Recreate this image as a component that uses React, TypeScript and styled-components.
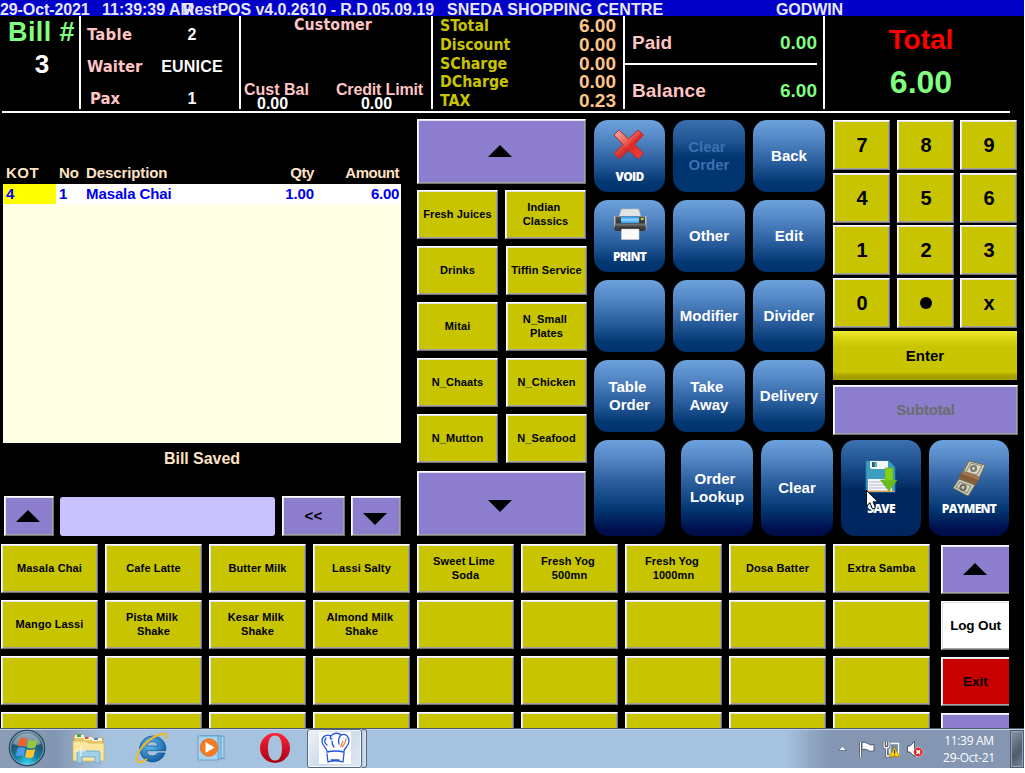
import React from 'react';
import styled, { createGlobalStyle, css } from 'styled-components';

const ARIAL = "'Liberation Sans', Arial, sans-serif";
const TAHOMA = "'DejaVu Sans Condensed', 'DejaVu Sans', Tahoma, sans-serif";

const Global = createGlobalStyle`
  *, *::before, *::after { box-sizing: border-box; }
  body { margin: 0; background: #fff; font-family: ${ARIAL}; }
  button { font-family: inherit; padding: 0; margin: 0; }
`;

const Screen = styled.div`
  position: relative;
  width: 1024px;
  height: 768px;
  display: flex;
  flex-direction: column;
  overflow: hidden;
  background: #000;
  font-weight: bold;
`;

/* ---------- title bar ---------- */

const TitleBar = styled.div`
  flex: none;
  display: flex;
  height: 16px;
  background: #0000c8;
  color: #e6e6f4;
  font-size: 16px;
  line-height: 19px;
  white-space: pre;
`;
const TitlePart = styled.span<{ $w: number; $track?: number }>`
  flex: none;
  width: ${p => p.$w}px;
  letter-spacing: ${p => p.$track ?? 0}px;
`;

/* ---------- header ---------- */

const Header = styled.header`
  flex: none;
  display: flex;
  height: 93px;
  line-height: 1;
`;
const Rule = styled.div`
  flex: none;
  width: 1008px;
  height: 2px;
  margin: 2px 0 0 2px;
  background: #fff;
`;
const Cell = styled.section<{ $w: number; $last?: boolean }>`
  flex: none;
  width: ${p => p.$w}px;
  height: 93px;
  border-right: ${p => (p.$last ? 'none' : '2px solid #fff')};
  display: flex;
  flex-direction: column;
`;
const Label = styled.span<{ $size?: number; $tahoma?: boolean; $color?: string; $indent?: number; $track?: number }>`
  font-family: ${p => (p.$tahoma ? TAHOMA : ARIAL)};
  font-size: ${p => p.$size ?? 16}px;
  color: ${p => p.$color ?? '#fff'};
  margin-left: ${p => p.$indent ?? 0}px;
  letter-spacing: ${p => p.$track ?? 0}px;
  white-space: nowrap;
`;
const BillBox = styled.div`
  display: flex;
  flex-direction: column;
  align-items: center;
  padding-left: 4px;
  line-height: 32px;
`;
const InfoRow = styled.div`
  display: grid;
  grid-template-columns: 65px 80px;
  height: 32px;
  margin-left: 6px;
  line-height: 32px;
  > :last-child { text-align: center; }
`;
const InfoRows = styled.div`
  margin-top: 2.500px;
`;
const CustomerTitle = styled.div`
  height: 17px;
  line-height: 18px;
  text-align: center;
  padding-right: 6px;
`;
const CustomerRow = styled.div`
  display: flex;
  justify-content: space-between;
  padding: 0 8px 0 3px;
  margin-top: 50px;
`;
const CustomerStat = styled.div`
  display: flex;
  flex-direction: column;
  line-height: 13.500px;
`;
const TotalsRow = styled.div`
  display: flex;
  flex: none;
  justify-content: space-between;
  height: 18.750px;
  line-height: 18.750px;
  padding: 0 7px 0 7px;
  &:first-child { margin-top: 1px; }
`;
const PayRow = styled.div`
  flex: none;
  display: flex;
  justify-content: space-between;
  align-items: center;
  height: 47px;
  width: 192px;
  padding: 6px 0 0 7px;
  & + & { border-top: 2px solid #fff; height: 46px; padding-top: 7px; }
`;
const GrandTotal = styled.div`
  display: flex;
  flex-direction: column;
  align-items: center;
  line-height: 43px;
  padding: 2px 7px 0 0;
`;

/* ---------- buttons ---------- */

const bevel = css`
  border: 1px solid;
  border-color: #fff #737373 #737373 #fff;
  box-shadow: inset 1px 1px #e6e3ea, inset -1px -1px #a2a2a2;
`;
const BevelButton = styled.button<{
  $w: number; $h: number; $tone?: 'olive' | 'violet' | 'white' | 'red';
  $size?: number; $muted?: boolean; $clipped?: boolean; $track?: number;
}>`
  ${bevel}
  flex: none;
  display: flex;
  align-items: center;
  justify-content: center;
  width: ${p => p.$w}px;
  height: ${p => p.$h}px;
  padding: ${p => (p.$size ? '0' : '0 0 2px 0')};
  background: ${p => ({ olive: '#c8c400', violet: '#8c7dce', white: '#fff', red: '#c80000' })[p.$tone ?? 'olive']};
  color: ${p => (p.$muted ? '#6d6d6d' : '#000')};
  font-size: ${p => p.$size ?? 11}px;
  font-weight: bold;
  line-height: 14px;
  letter-spacing: ${p => p.$track ?? 0.12}px;
  white-space: pre;
  text-align: center;
  ${p => p.$clipped && css`
    border-right: none;
    box-shadow: inset 1px 1px #e6e3ea, inset 0 -1px #a2a2a2;
  `}
`;
const Arrow = styled.svg<{ $dx?: number; $dy?: number }>`
  display: block;
  margin: ${p => p.$dy ?? 0}px 0 0 ${p => p.$dx ?? 0}px;
`;
const Up = (p: { $dx?: number; $dy?: number }) => (
  <Arrow width="24" height="12" viewBox="0 0 24 12" {...p}><path d="M12 0L24 12H0Z" fill="#000" /></Arrow>
);
const Down = (p: { $dx?: number; $dy?: number }) => (
  <Arrow width="24" height="12" viewBox="0 0 24 12" {...p}><path d="M0 0H24L12 12Z" fill="#000" /></Arrow>
);

const fills = {
  normal: 'linear-gradient(#6ea2dd 0%, #5c90cd 18%, #2c5f9f 58%, #053a75 85%, #00326c 100%)',
  tall: 'linear-gradient(#6ea2dd 0%, #5486c4 20%, #2a5c9c 45%, #033873 72%, #000f4e 93%, #000c49 100%)',
  dim: 'linear-gradient(#3b70af 0%, #1f5391 30%, #00356f 52%, #00356f 100%)',
  pressed: 'linear-gradient(#3c72b1 0%, #1f5090 25%, #00285f 52%, #00265f 100%)',
};
const GlossButton = styled.button<{ $w?: number; $h?: number; $fill?: keyof typeof fills }>`
  flex: none;
  display: flex;
  flex-direction: column;
  align-items: center;
  justify-content: center;
  width: ${p => p.$w ?? 72}px;
  height: ${p => p.$h ?? 72}px;
  border: none;
  border-radius: 14px;
  background: ${p => fills[p.$fill ?? 'normal']};
  color: ${p => (p.$fill === 'dim' ? '#3c70b3' : '#fff')};
  font-size: 15px;
  font-weight: bold;
  line-height: 18px;
  white-space: pre;
`;
const IconCaption = styled.span<{ $gap: number }>`
  margin-top: ${p => p.$gap}px;
  font-family: 'Open Sans', 'Noto Sans', sans-serif;
  font-size: 12px;
  font-weight: 800;
  line-height: 14px;
  letter-spacing: -0.75px;
`;

/* ---------- main area ---------- */

const Main = styled.main`
  flex: none;
  display: flex;
  height: 431px;
`;
const OrderPane = styled.div`
  flex: none;
  display: flex;
  flex-direction: column;
  width: 398px;
  margin: 49px 16px 0 3px;
`;
const OrderLine = styled.div<{ $head?: boolean }>`
  flex: none;
  display: grid;
  grid-template-columns: 53px 27px 160px 71px 87px;
  height: ${p => (p.$head ? 22 : 20)}px;
  line-height: ${p => (p.$head ? 22 : 20)}px;
  font-size: 15px;
  color: ${p => (p.$head ? '#ffe2c4' : '#0000f0')};
  background: ${p => (p.$head ? 'transparent' : '#fff')};
`;
const Col = styled.span<{ $right?: boolean; $mark?: boolean; $pad?: number; $track?: number }>`
  padding: 0 ${p => (p.$right ? p.$pad ?? 0 : 0)}px 0 ${p => (p.$right ? 0 : p.$pad ?? 3)}px;
  text-align: ${p => (p.$right ? 'right' : 'left')};
  letter-spacing: ${p => p.$track ?? -0.1}px;
  background: ${p => (p.$mark ? '#ffff00' : 'transparent')};
`;
const OrderBlank = styled.div`
  flex: none;
  height: 239px;
  background: #ffffe6;
`;
const Status = styled.div`
  flex: none;
  height: 53px;
  line-height: 31px;
  font-size: 16px;
  letter-spacing: -0.05px;
  color: #ffe2c4;
  text-align: center;
`;
const EntryRow = styled.div`
  display: flex;
  align-items: flex-start;
  height: 40px;
  padding-left: 1px;
`;
const EntryField = styled.div`
  flex: none;
  width: 215px;
  height: 39px;
  margin: 1px 7px 0 6px;
  border-radius: 3px;
  background: #c8c3ff;
`;
const Spacer = styled.span`
  flex: none;
  width: 6px;
`;
const CategoryPane = styled.div`
  flex: none;
  width: 170px;
  margin: 6px 7px 0 0;
`;
const CategoryGrid = styled.div`
  display: grid;
  grid-template-columns: 81px 82px;
  column-gap: 7px;
  row-gap: 7px;
  margin: 6px 0 8px;
  > :nth-child(even):not(:nth-child(2)) { justify-self: end; }
`;
const ActionPane = styled.div`
  flex: none;
  width: 430px;
  margin-top: 7px;
`;
const ActionTop = styled.div`
  display: flex;
  height: 320px;
`;
const ActionGrid = styled.div`
  flex: none;
  display: grid;
  grid-template-columns: 71px 72px 72px;
  grid-auto-rows: 72px;
  column-gap: 8px;
  row-gap: 8px;
  width: 239px;
`;
const Keypad = styled.div`
  flex: none;
  width: 185px;
`;
const KeyGrid = styled.div`
  display: grid;
  grid-template-columns: 64px 63px 57px;
  grid-template-rows: 53px 52px 53px 53px;
`;
const EnterButton = styled.button`
  display: block;
  width: 184px;
  height: 49px;
  margin-bottom: 5px;
  border: none;
  background: linear-gradient(#eeea2c 0, #d8d412 8px, #c8c400 16px, #c8c400 41px, #a4a000 45px, #a4a000 49px);
  font-size: 15px;
  font-weight: bold;
`;
const ActionBottom = styled.div`
  display: flex;
  gap: 8px;
  > :first-child { margin-right: 8px; }
`;

/* ---------- products ---------- */

const Products = styled.div`
  flex: none;
  display: flex;
  height: 184px;
  overflow: hidden;
  padding-left: 1px;
`;
const ProductGrid = styled.div`
  flex: none;
  display: grid;
  grid-template-columns: repeat(9, 104px);
  grid-auto-rows: 56px;
  width: 940px;
`;
const SideColumn = styled.div`
  display: flex;
  flex-direction: column;
  gap: 7px;
  padding-top: 1px;
`;

/* ---------- taskbar ---------- */

const Taskbar = styled.footer`
  flex: none;
  display: flex;
  height: 40px;
  border-top: 1px solid #4d5b6b;
  box-shadow: inset 0 1px #c2d2e4;
  background: linear-gradient(90deg, #8c9db5 0, #8296b1 55px, #98b1cd 88px, #a5c2df 105px, #a5c2df 785px, #8fa6c3 812px, #8496b1 832px, #8496b1 100%);
`;
const TaskItem = styled.div<{ $w: number; $active?: boolean }>`
  flex: none;
  display: flex;
  align-items: center;
  justify-content: center;
  width: ${p => p.$w}px;
  height: ${p => (p.$active ? 39 : 38)}px;
  ${p => p.$active && css`
    border: 1px solid #56657a;
    border-radius: 3px;
    padding-bottom: 2px;
    background: linear-gradient(135deg, #eef3f9, #cddcec 50%, #dfe9f4);
    box-shadow: inset 0 0 0 1px #f4f8fc;
  `}
`;
const StackEdge = styled.div`
  width: 5px;
  height: 39px;
  border: 1px solid #56657a;
  border-left: none;
  border-radius: 0 3px 3px 0;
  background: linear-gradient(90deg, #b8c9dd, #dbe6f2);
`;
const Tray = styled.div`
  display: flex;
  align-items: center;
  margin-left: auto;
  padding-top: 1px;
`;
const Clock = styled.div`
  width: 84px;
  padding-left: 2px;
  font-family: 'Open Sans', 'Noto Sans', sans-serif;
  font-size: 12px;
  font-weight: 400;
  line-height: 17px;
  letter-spacing: -0.3px;
  color: #fff;
  text-align: center;
`;
const ShowDesktop = styled.div`
  width: 14px;
  height: 38px;
  border: 1px solid #4c5a6c;
  box-shadow: inset 0 0 0 1px #94a3b5;
  background: linear-gradient(135deg, #8b99aa 0%, #5a6877 45%, #4f5d6d 60%, #76869a 100%);
`;
const Pointer = styled.svg`
  position: absolute;
  left: 866px;
  top: 490px;
`;

/* ---------- icons ---------- */

const VoidIcon = () => (
  <svg width="33" height="32" viewBox="0 0 33 32">
    <defs><linearGradient id="vx" x1="0" y1="0" x2="1" y2="1"><stop offset="0" stopColor="#f9b5a8" /><stop offset=".45" stopColor="#e6564c" /><stop offset=".55" stopColor="#dd2a26" /><stop offset="1" stopColor="#f0443a" /></linearGradient></defs>
    <path d="M1 7L6 2L15.500 11L25 2L30.500 7L21.500 16.500L30.500 25.500L25 31L15.500 22L6.500 31L1 25.500L10 16.500Z" fill="url(#vx)" stroke="#b3282a" strokeWidth="1" strokeLinejoin="round" />
    <path d="M15.500 22L6.500 31L1 25.500L10 16.500Z" fill="#c92b2c" opacity=".35" />
  </svg>
);
const PrinterIcon = () => (
  <svg width="34" height="32" viewBox="0 0 34 32">
    <defs>
      <linearGradient id="pb" x1="0" y1="0" x2="0" y2="1"><stop offset="0" stopColor="#5c5c5e" /><stop offset="1" stopColor="#303032" /></linearGradient>
      <linearGradient id="pg" x1="0" y1="0" x2="0" y2="1"><stop offset="0" stopColor="#1f8de6" /><stop offset=".5" stopColor="#8fd3ff" /><stop offset="1" stopColor="#2b9cf0" /></linearGradient>
    </defs>
    <path d="M8 2Q8 1 9 1H25Q26 1 26 2L28 9H6Z" fill="#e3e3e5" stroke="#bbb" strokeWidth=".6" />
    <path d="M1 8H33.500V22H1Z" fill="#b9babd" />
    <path d="M2.500 8.500H32V15H2.500Z" fill="url(#pb)" />
    <path d="M8 8.500H26V15H8Z" fill="url(#pg)" />
    <path d="M2.500 15H32L33 20.500Q33 23 30 23H4Q1 23 1 20.500Z" fill="url(#pb)" />
    <path d="M2.500 16H32V17.500H2.500Z" fill="#85868a" opacity=".6" />
    <rect x="28" y="10" width="2.500" height="2" fill="#b7e51d" />
    <path d="M7 19.500H27V21.500H7Z" fill="#222" />
    <path d="M8.500 21H26V31.500H8.500Z" fill="#fafafa" stroke="#ccc" strokeWidth=".6" />
  </svg>
);
const SaveIcon = () => (
  <svg width="32" height="33" viewBox="0 0 32 33">
    <path d="M1 1H24L30 7V32H3L1 30Z" fill="#3e9cc0" stroke="#2381a8" strokeWidth=".8" />
    <path d="M5 1H23V7Q23 9 21 9H7Q5 9 5 7Z" fill="#f7f7f7" /><path d="M7 2H12V7H7Z" fill="#1c5d80" /><path d="M9.500 2H12V7H9.500Z" fill="#5fb0cf" />
    <path d="M3 19H27V31H3Z" fill="#f5f5fa" /><path d="M4 22H25M4 25H25M4 28H25" stroke="#b9b9cf" strokeWidth="1" />
    <path d="M2 30.500H29V32H2Z" fill="#d9a65d" />
    <path d="M20 8H28V20H32L24 31L15.500 20H20Z" fill="#84d016" stroke="#5fae15" strokeWidth=".6" />
    <path d="M15.500 20H32L24 31Z" fill="#5fb024" opacity=".7" />
  </svg>
);
const CashIcon = () => (
  <svg width="34" height="37" viewBox="0 0 34 37">
    <path d="M16 1L33 5L17 36L2 28Z" fill="#85806a" />
    <path d="M17 1L33 5L27 18L11 13Z" fill="#dcdac5" stroke="#6e6b58" strokeWidth="1" />
    <path d="M7 19L23 25L16 36L1 28Z" fill="#d4d2bc" stroke="#6e6b58" strokeWidth="1" />
    <path d="M19 3L30 6L25 15L14 12Z M8 22L19 26L15 33L4 27Z" fill="none" stroke="#8f8e77" strokeWidth="1.200" />
    <circle cx="21.500" cy="8.500" r="3.600" fill="#77796b" /><circle cx="21.500" cy="8.500" r="1.400" fill="#d7d6c2" />
    <circle cx="11" cy="27.500" r="3.600" fill="#696b60" /><circle cx="11" cy="27.500" r="1.400" fill="#d7d6c2" />
    <path d="M11 11L28 17L24 25L6 18Z" fill="#855c38" /><path d="M11 11L28 17L26.500 20L9.500 14Z" fill="#a07550" />
  </svg>
);
const StartOrb = () => (
  <svg width="38" height="38" viewBox="0 0 38 38">
    <defs>
      <radialGradient id="ob" cx=".5" cy=".95" r=".9"><stop offset="0" stopColor="#3fd6f0" /><stop offset=".35" stopColor="#1583ad" /><stop offset=".7" stopColor="#24536f" /><stop offset="1" stopColor="#6d8796" /></radialGradient>
    </defs>
    <circle cx="19" cy="19" r="17.700" fill="url(#ob)" stroke="#29485e" strokeWidth="1.200" />
    <path d="M5 15A14.500 14.500 0 0 1 33 15Q19 20 5 15Z" fill="#d3e0e8" opacity=".45" />
    <path d="M11.500 10Q15 7.500 19 10L17.500 18Q14 15.500 9.800 17.800Z" fill="#f0622a" />
    <path d="M20.500 10.800Q25 13 29.500 10.500L27.500 18.500Q23.500 20.500 19 18.500Z" fill="#92c83e" />
    <path d="M9.400 19.500Q13.500 17.200 17.200 19.600L15.600 27.500Q12 25.500 7.800 27.300Z" fill="#4a9be8" />
    <path d="M18.700 20.200Q23 22 27.200 20.100L25.300 28Q21.500 30 17.100 28Z" fill="#ffc52b" />
    <circle cx="19" cy="19" r="16.500" fill="none" stroke="#a8d3e4" strokeWidth=".8" opacity=".7" />
  </svg>
);
const ExplorerIcon = () => (
  <svg width="33" height="31" viewBox="0 0 33 31">
    <path d="M2 3Q2 2 3 2H10L12 5H31V27H2Z" fill="#e8c768" stroke="#c69c3c" strokeWidth=".8" />
    <path d="M3 2H12V5H3Z M12 4H20V7H12Z M20 5H30V8H20Z" fill="#fbf3d2" />
    <path d="M5 1.500H9V4H5Z" fill="#2faa3c" /><path d="M13 4H16.500V6H13Z" fill="#e34a38" /><path d="M22 5H26V7H22Z" fill="#3c8fd8" />
    <path d="M1 8H14L16 10H32V26Q32 28 30 28H3Q1 28 1 26Z" fill="#f9e7a0" stroke="#d8b458" strokeWidth=".8" />
    <path d="M5 30V20Q5 18 7 18H26Q28 18 28 20V30H23V24H10V30Z" fill="#9fd0ea" stroke="#5fa3cb" strokeWidth=".8" />
    <path d="M9 13V23M4 18H14" stroke="#fff" strokeWidth="1" opacity=".9" />
  </svg>
);
const BrowserIcon = () => (
  <svg width="33" height="32" viewBox="0 0 33 32">
    <defs><radialGradient id="ie" cx=".4" cy=".35" r=".75"><stop offset="0" stopColor="#5fc0f0" /><stop offset="1" stopColor="#0c4f97" /></radialGradient></defs>
    <path d="M17.500 4A13 13 0 1 0 30 21H22.500Q21 24 17.500 24Q12 24 11.500 18.700H30.700A13 13 0 0 0 17.500 4ZM11.600 14Q12.500 9.600 17.300 9.600Q22 9.600 22.800 14Z" fill="url(#ie)" stroke="#0d4e8e" strokeWidth=".7" />
    <path d="M31 7Q33 1 27 2Q17 4 8 14Q0 24 2 29Q4 32.500 12 27" fill="none" stroke="#f2b824" strokeWidth="2" />
  </svg>
);
const MediaIcon = () => (
  <svg width="30" height="28" viewBox="0 0 30 28">
    <path d="M24 4L27 3V24L29 25L14 26Z" fill="#7597b4" opacity=".6" />
    <path d="M5 2H27V24H5Z" fill="#a6d3ee" stroke="#5e9cc4" strokeWidth=".8" />
    <path d="M3 2H24V25H3Z" fill="#8fc3e4" stroke="#5e9cc4" strokeWidth=".8" />
    <path d="M1 2H21V26H1Z" fill="#a9d3ec" stroke="#5e9cc4" strokeWidth=".8" />
    <circle cx="12" cy="13.500" r="8.800" fill="#f47b20" stroke="#d9610f" strokeWidth=".6" />
    <path d="M8.500 8L17.500 13.500L8.500 19Z" fill="#fff" />
  </svg>
);
const OperaIcon = () => (
  <svg width="32" height="32" viewBox="0 0 32 32">
    <defs><linearGradient id="op" x1="0" y1="0" x2="0" y2="1"><stop offset="0" stopColor="#ff2337" /><stop offset="1" stopColor="#a70014" /></linearGradient></defs>
    <path fillRule="evenodd" d="M15 1A15 15 0 1 0 15 31A15 15 0 1 0 15 1ZM15 3.500C20.500 3.500 22 10 22 16S20.500 28.500 15 28.500S8 22 8 16S9.500 3.500 15 3.500Z" fill="url(#op)" />
  </svg>
);
const ChefIcon = () => (
  <svg width="32" height="32" viewBox="0 0 32 32">
    <rect width="32" height="32" fill="#fff" />
    <g fill="none" stroke="#2356e0" strokeWidth="1.300" strokeLinecap="round">
      <path d="M8 19C8 16 3 14 3 9C3 4 8 2 12 4C14 .5 20 .5 22 3C27 1 30 5 30 9C30 14 26 15 25 19" />
      <path d="M12 4C10 6 12 8 13 6.500M22 3C20 5 19 8 20 12M13 9C13 13 14 14 15 15M7 6Q4 10 8 13" />
      <path d="M8 20Q16 18 25 20M8 22L9 30M25 21L24 30M9 30Q16 27.500 24 30M12 28H20" />
    </g>
    <path d="M27 6Q27 11 23 15M24 9L21.500 15" stroke="#e6874c" strokeWidth="1.300" fill="none" />
  </svg>
);
const TrayIcons = () => (
  <svg width="88" height="21" viewBox="0 0 88 21">
    <path d="M.5 11.500L4.500 7L8.500 11.500Z" fill="#fff" stroke="#56657a" strokeWidth=".8" />
    <path d="M22.500 3V18" stroke="#2f3b48" strokeWidth="3" /><path d="M22.500 3V18" stroke="#fff" strokeWidth="1.500" />
    <path d="M24 3.500Q27 2.500 29.500 4.500Q33 7 36 5.500V12Q32 13 29.500 11Q27 9.500 24 10.500Z" fill="#fff" stroke="#39475a" strokeWidth=".8" />
    <path d="M52 4.500H60.500V16H52Z" fill="#71889d" stroke="#fff" strokeWidth="1.300" />
    <path d="M46 2.500V7Q46 9 48.500 9Q51 9 51 7V2.500M48.500 3V6M48.500 9V17H54" stroke="#37444f" strokeWidth="2.600" fill="none" />
    <path d="M46 2.500V7Q46 9 48.500 9Q51 9 51 7V2.500M48.500 3V6M48.500 9V17H54" stroke="#fff" strokeWidth="1.300" fill="none" />
    <path d="M56.500 8.500L61.500 17.500H51.500Z" fill="#ffd80f" stroke="#b28b00" strokeWidth=".8" /><path d="M56.500 11V14.500M56.500 15.500V16.500" stroke="#333" strokeWidth="1.200" />
    <path d="M69.500 7H72L76.500 2.500V17.500L72 13H69.500Z" fill="#fff" stroke="#46535f" strokeWidth=".9" />
    <circle cx="80.300" cy="13" r="4.700" fill="#d9201c" stroke="#fff" strokeWidth=".5" /><path d="M78.400 11.100L82.200 14.900M82.200 11.100L78.400 14.900" stroke="#fff" strokeWidth="1.500" />
  </svg>
);

/* ---------- data ---------- */

const categories = [
  'Fresh Juices', 'Indian \nClassics', 'Drinks', 'Tiffin Service', 'Mitai',
  'N_Small \nPlates', 'N_Chaats', 'N_Chicken', 'N_Mutton', 'N_Seafood',
];
const products = [
  'Masala Chai', 'Cafe Latte', 'Butter Milk', 'Lassi Salty', 'Sweet Lime \nSoda', 'Fresh Yog \n500mn', 'Fresh Yog \n1000mn', 'Dosa Batter', 'Extra Samba',
  'Mango Lassi', 'Pista Milk \nShake', 'Kesar Milk \nShake', 'Almond Milk \nShake',
  ...Array<string>(23).fill(''),
];
const totals: [string, string][] = [
  ['STotal', '6.00'], ['Discount', '0.00'], ['SCharge', '0.00'], ['DCharge', '0.00'], ['TAX', '0.23'],
];
const actions = ['Back', 'PRINT', 'Other', 'Edit', '', 'Modifier', 'Divider', 'Table \nOrder', 'Take \nAway', 'Delivery'];
const keys = ['7', '8', '9', '4', '5', '6', '1', '2', '3', '0', '.', 'x'];

const PINK = '#ffc4c4';
const GREEN = '#80ff80';

export default function App() {
  return (
    <>
      <Global />
      <Screen>
        <TitleBar>
          <TitlePart $w={102} $track={-0.1}>29-Oct-2021</TitlePart>
          <TitlePart $w={81}>11:39:39 AM</TitlePart>
          <TitlePart $w={264} $track={-0.05}>RestPOS v4.0.2610 - R.D.05.09.19</TitlePart>
          <TitlePart $w={329} $track={0.08}>SNEDA SHOPPING CENTRE</TitlePart>
          <TitlePart $w={100} $track={-0.1}>GODWIN</TitlePart>
        </TitleBar>

        <Header>
          <Cell $w={81}>
            <BillBox>
              <Label $size={27} $color={GREEN} $track={0.4}>Bill #</Label>
              <Label $size={26} $track={-1}>3</Label>
            </BillBox>
          </Cell>
          <Cell $w={160}>
            <InfoRows>
              <InfoRow><Label $tahoma $size={16.5} $color={PINK} $track={0.3}>Table</Label><Label>2</Label></InfoRow>
              <InfoRow><Label $tahoma $size={16.5} $color={PINK}>Waiter</Label><Label $track={0.2}>EUNICE</Label></InfoRow>
              <InfoRow><Label $tahoma $size={16.5} $color={PINK} $indent={3}>Pax</Label><Label>1</Label></InfoRow>
            </InfoRows>
          </Cell>
          <Cell $w={192}>
            <CustomerTitle><Label $tahoma $size={15.8} $color={PINK} $track={0.1}>Customer</Label></CustomerTitle>
            <CustomerRow>
              <CustomerStat>
                <Label $color={PINK}>Cust Bal</Label>
                <Label $indent={13}>0.00</Label>
              </CustomerStat>
              <CustomerStat>
                <Label $color={PINK} $track={-0.15}>Credit Limit</Label>
                <Label $indent={25}>0.00</Label>
              </CustomerStat>
            </CustomerRow>
          </Cell>
          <Cell $w={192}>
            {totals.map(([name, value]) => (
              <TotalsRow key={name}>
                <Label $tahoma $size={15.8} $color="#c8c400">{name}</Label>
                <Label $size={19} $color="#ffc488">{value}</Label>
              </TotalsRow>
            ))}
          </Cell>
          <Cell $w={200}>
            <PayRow><Label $size={19} $color={PINK}>Paid</Label><Label $size={19} $color={GREEN}>0.00</Label></PayRow>
            <PayRow><Label $size={19} $color={PINK} $track={0.15}>Balance</Label><Label $size={19} $color={GREEN}>6.00</Label></PayRow>
          </Cell>
          <Cell $w={199} $last>
            <GrandTotal>
              <Label $size={28} $color="#ff0000">Total</Label>
              <Label $size={32} $color={GREEN}>6.00</Label>
            </GrandTotal>
          </Cell>
        </Header>
        <Rule />

        <Main>
          <OrderPane>
            <OrderLine $head>
              <Col $track={0.5}>KOT</Col><Col>No</Col><Col>Description</Col><Col $right $track={-0.4}>Qty</Col><Col $right $pad={2} $track={-0.5}>Amount</Col>
            </OrderLine>
            <OrderLine>
              <Col $mark>4</Col><Col>1</Col><Col>Masala Chai</Col><Col $right>1.00</Col><Col $right $pad={2} $track={-0.3}>6.00</Col>
            </OrderLine>
            <OrderBlank />
            <Status>Bill Saved</Status>
            <EntryRow>
              <BevelButton $w={50} $h={40} $tone="violet"><Up $dx={-2} $dy={2} /></BevelButton>
              <EntryField />
              <BevelButton $w={63} $h={40} $tone="violet" $size={15} $track={0.3}>&lt;&lt;</BevelButton>
              <Spacer />
              <BevelButton $w={50} $h={40} $tone="violet"><Down $dx={-2} $dy={7} /></BevelButton>
            </EntryRow>
          </OrderPane>

          <CategoryPane>
            <BevelButton $w={169} $h={65} $tone="violet"><Up $dx={-3} $dy={1} /></BevelButton>
            <CategoryGrid>
              {categories.map(name => <BevelButton key={name} $w={81} $h={49}>{name}</BevelButton>)}
            </CategoryGrid>
            <BevelButton $w={169} $h={65} $tone="violet"><Down $dx={-3} $dy={6} /></BevelButton>
          </CategoryPane>

          <ActionPane>
            <ActionTop>
              <ActionGrid>
                <GlossButton $w={71}><VoidIcon /><IconCaption $gap={10}>VOID</IconCaption></GlossButton>
                <GlossButton $fill="dim">{'Clear \nOrder'}</GlossButton>
                {actions.map((name, i) => (
                  <GlossButton key={i} $w={i % 3 === 1 ? 71 : 72}>
                    {name === 'PRINT' ? <><PrinterIcon /><IconCaption $gap={10}>PRINT</IconCaption></> : name}
                  </GlossButton>
                ))}
              </ActionGrid>
              <Keypad>
                <KeyGrid>
                  {keys.map(k => (
                    <BevelButton key={k} $w={57} $h={50} $size={20} $track={-0.9}>
                      {k === '.' ? <svg width="12" height="12"><circle cx="6" cy="6" r="6" /></svg> : k}
                    </BevelButton>
                  ))}
                </KeyGrid>
                <EnterButton>Enter</EnterButton>
                <BevelButton $w={185} $h={50} $tone="violet" $size={15} $track={-0.2} $muted>Subtotal</BevelButton>
              </Keypad>
            </ActionTop>
            <ActionBottom>
              <GlossButton $w={71} $h={96} $fill="tall" />
              <GlossButton $h={96} $fill="tall">{'Order \nLookup'}</GlossButton>
              <GlossButton $h={96} $fill="tall">Clear</GlossButton>
              <GlossButton $w={80} $h={96} $fill="pressed"><SaveIcon /><IconCaption $gap={9}>SAVE</IconCaption></GlossButton>
              <GlossButton $w={80} $h={96} $fill="tall"><CashIcon /><IconCaption $gap={5}>PAYMENT</IconCaption></GlossButton>
            </ActionBottom>
          </ActionPane>
        </Main>

        <Products>
          <ProductGrid>
            {products.map((name, i) => <BevelButton key={i} $w={97} $h={49}>{name}</BevelButton>)}
          </ProductGrid>
          <SideColumn>
            <BevelButton $w={68} $h={49} $tone="violet" $clipped><Up $dx={-1} /></BevelButton>
            <BevelButton $w={68} $h={49} $tone="white" $size={13.5} $track={-0.15} $clipped>Log Out</BevelButton>
            <BevelButton $w={68} $h={49} $tone="red" $size={13.5} $track={0} $clipped>Exit</BevelButton>
            <BevelButton $w={68} $h={49} $tone="violet" $clipped />
          </SideColumn>
        </Products>

        <Taskbar>
          <TaskItem $w={54}><StartOrb /></TaskItem>
          <TaskItem $w={69}><ExplorerIcon /></TaskItem>
          <TaskItem $w={56}><BrowserIcon /></TaskItem>
          <TaskItem $w={65}><MediaIcon /></TaskItem>
          <TaskItem $w={63}><OperaIcon /></TaskItem>
          <TaskItem $w={55} $active><ChefIcon /></TaskItem>
          <StackEdge />
          <Tray>
            <TrayIcons />
            <Clock>11:39 AM<br />29-Oct-21</Clock>
            <ShowDesktop />
          </Tray>
        </Taskbar>

        <Pointer width="14" height="21" viewBox="0 0 14 21">
          <path d="M.5 .5V16L4 12.800L6.500 19L9.500 17.700L7 11.800H12Z" fill="#fff" stroke="#000" strokeWidth=".9" />
        </Pointer>
      </Screen>
    </>
  );
}
